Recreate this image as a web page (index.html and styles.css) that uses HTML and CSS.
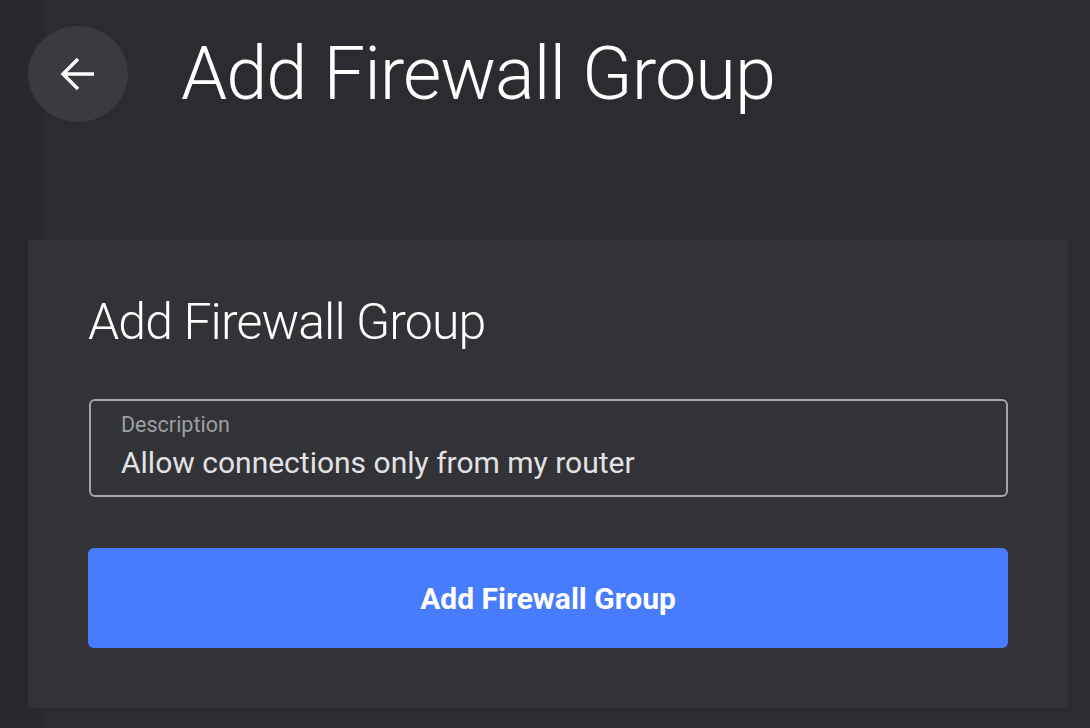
FILE: index.html
```html
<!DOCTYPE html>
<html lang="en">
<head>
<meta charset="utf-8">
<title>Add Firewall Group</title>
<link rel="stylesheet" href="styles.css">
</head>
<body>
<div class="page">
  <header class="header">
    <button class="back" type="button" aria-label="Back">
      <svg width="40" height="40" viewBox="0 0 40 40" aria-hidden="true">
        <path d="M36 20 H6 M20 5 L5 20 L20 35" fill="none" stroke="#ffffff" stroke-width="3.4" stroke-linecap="butt" stroke-linejoin="miter"/>
      </svg>
    </button>
    <h1 class="page-title">Add Firewall Group</h1>
  </header>
  <section class="card">
    <h2 class="card-title">Add Firewall Group</h2>
    <div class="field">
      <div class="field-label">Description</div>
      <div class="field-value">Allow connections only from my router</div>
    </div>
    <button class="submit" type="button">Add Firewall Group</button>
  </section>
</div>
</body>
</html>
```

FILE: styles.css
```css
* { box-sizing: border-box; }
html, body {
  margin: 0;
  padding: 0;
}
body {
  width: 1090px;
  height: 728px;
  overflow: hidden;
  font-family: Roboto, "Liberation Sans", sans-serif;
  color: #ffffff;
  background: linear-gradient(to right, #28292d 0, #28292d 45px, #2b2c30 45px);
}
.page {
  display: flex;
  flex-direction: column;
  padding-left: 28px;
}
.header {
  display: flex;
  align-items: center;
  padding-top: 26px;
  height: 122px;
}
.back {
  width: 100px;
  height: 96px;
  border-radius: 50%;
  border: none;
  padding: 0;
  background: #3a3b40;
  display: flex;
  align-items: center;
  justify-content: center;
  cursor: pointer;
}
.page-title {
  margin: 0 0 0 53px;
  font-size: 74px;
  font-weight: 300;
  letter-spacing: -1px;
  line-height: 96px;
  color: #ffffff;
}
.card {
  margin-top: 118px;
  width: 1040px;
  height: 468px;
  background: #323337;
  padding: 52px 60px 60px 60px;
  display: flex;
  flex-direction: column;
}
.card-title {
  margin: 0;
  font-size: 50px;
  font-weight: 300;
  letter-spacing: -0.9px;
  line-height: 60px;
  color: #ffffff;
}
.field {
  margin-top: 47px;
  height: 98px;
  border: 2px solid #a4a5a8;
  border-radius: 6px;
  padding: 12px 30px 15px 30px;
  margin-left: 1px;
  margin-right: 0;
}
.field-label {
  font-size: 21.5px;
  line-height: 24px;
  color: #9d9ea2;
}
.field-value {
  margin-top: 9px;
  font-size: 30px;
  line-height: 34px;
  color: #e2e2e4;
}
.submit {
  margin-top: 51px;
  height: 100px;
  border: none;
  border-radius: 6px;
  background: #487cff;
  color: #ffffff;
  font-family: Roboto, "Liberation Sans", sans-serif;
  font-size: 30px;
  font-weight: 700;
  cursor: pointer;
}
```
